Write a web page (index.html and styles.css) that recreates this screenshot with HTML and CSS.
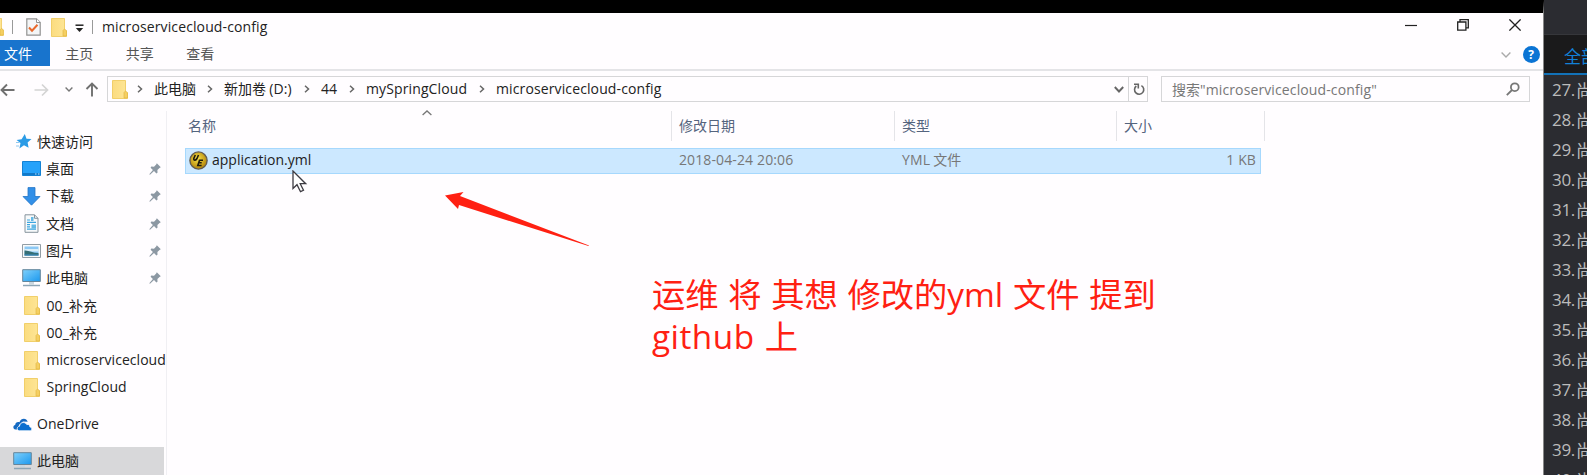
FILE: index.html
```html
<!DOCTYPE html>
<html lang="zh-CN">
<head>
<meta charset="utf-8">
<title>microservicecloud-config</title>
<link rel="stylesheet" href="styles.css">
</head>
<body>
<svg class="defs" width="0" height="0">
  <defs>
    <linearGradient id="gFolder" x1="0" x2="1"><stop offset="0" stop-color="#fbdc80"/><stop offset="1" stop-color="#fee697"/></linearGradient>
    <linearGradient id="gScreen" x1="0" y1="0" x2="1" y2="1"><stop offset="0" stop-color="#7fd0fb"/><stop offset="1" stop-color="#1b98ee"/></linearGradient>
    <radialGradient id="gUe" cx=".45" cy=".4"><stop offset="0" stop-color="#f5e04a"/><stop offset="1" stop-color="#bd9212"/></radialGradient>
    <symbol id="folder" viewBox="0 0 16 19"><path d="M.5.5h13V12l2 1v5.5H.5z" fill="url(#gFolder)" stroke="#eec654" stroke-width=".8"/><path d="M12 18v-5.5l1.5-1.5 2 1.500V18z" fill="#f5cf62" stroke="#dfb33c" stroke-width=".6"/></symbol>
    <symbol id="pc" viewBox="0 0 19 18"><path d="M.7.7h17.600v11.800H.7z" fill="url(#gScreen)" stroke="#66859a" stroke-width="1"/><path d="M7 13h5v2.500H7z" fill="#c9d6df"/><path d="M1 16.500h17" stroke="#8da5b5" stroke-width="1.500"/></symbol>
    <symbol id="pin" viewBox="0 0 12 12"><path d="M7.800.3l4 4-1.300.6-2.100 2.200.1 2.700-1.100.6-2.400-2.300L1 11.800l-.7-.6L3.900 7 1.600 4.700l.7-1.100 2.700.1L7.200 1.500z" fill="#8c98a3"/></symbol>
    <symbol id="chev" viewBox="0 0 6 8"><path d="M1 .8L4.500 4 1 7.200" fill="none" stroke="#666" stroke-width="1.500"/></symbol>
  </defs>
</svg>
<div class="screen">
  <main class="window">
    <div class="titlebar">
      <div class="quick">
        <svg class="q-cut" width="4" height="18" viewBox="12 0 4 19"><use href="#folder" width="16" height="19"/></svg>
        <i class="q-sep"></i>
        <svg class="q-check" width="15" height="18" viewBox="0 0 15 18"><path d="M.8.800h9.700l3.700 3.700v12.700H.8z" fill="#f4f5f7" stroke="#929292" stroke-width="1.200"/><path d="M10.500.8v3.700h3.700" fill="#fff" stroke="#929292"/><path d="M3 9.500l3 3.200 5.500-6" fill="none" stroke="#e8682c" stroke-width="2"/></svg>
        <svg class="q-folder" width="16" height="19"><use href="#folder"/></svg>
        <svg class="q-drop" width="9" height="9" viewBox="0 0 9 9"><path d="M.5 1.200h8" stroke="#222" stroke-width="1.500"/><path d="M.8 4h7.400L4.500 8z" fill="#222"/></svg>
        <i class="q-sep"></i>
        <h1 class="title lat">microservicecloud-config</h1>
      </div>
      <div class="controls">
        <svg width="12" height="12" viewBox="0 0 12 12"><path d="M0 6.500h12" stroke="#222" stroke-width="1.200"/></svg>
        <svg width="12" height="12" viewBox="0 0 12 12" fill="none" stroke="#222" stroke-width="1.300"><path d="M.7 3h8.200v8.200H.7zM3 3V.7h8.300v8.200H9"/></svg>
        <svg width="12" height="12" viewBox="0 0 12 12"><path d="M.4.4l11.200 11.200M11.600.4L.4 11.600" stroke="#222" stroke-width="1.300"/></svg>
      </div>
    </div>
    <nav class="ribbon">
      <span class="tab file">文件</span><span class="tab">主页</span><span class="tab">共享</span><span class="tab">查看</span>
      <div class="help">
        <svg width="10" height="6" viewBox="0 0 10 6"><path d="M.6.6L5 5 9.400.6" fill="none" stroke="#aaa" stroke-width="1.400"/></svg>
        <span class="q">?</span>
      </div>
    </nav>
    <div class="address">
      <div class="arrows">
        <svg width="15" height="14" viewBox="0 0 15 14" fill="none" stroke="#707070" stroke-width="1.900"><path d="M14.500 7H2M7 1.500L1.500 7 7 12.500"/></svg>
        <svg width="15" height="14" viewBox="0 0 15 14" fill="none" stroke="#d4d4d4" stroke-width="1.700"><path d="M.5 7H13M8 1.500L13.500 7 8 12.500"/></svg>
        <svg width="8" height="5" viewBox="0 0 8 5" fill="none" stroke="#777" stroke-width="1.400"><path d="M.6.600L4 4 7.400.6"/></svg>
        <svg width="14" height="15" viewBox="0 0 14 15" fill="none" stroke="#707070" stroke-width="1.900"><path d="M7 14.500V2M1.500 7L7 1.500 12.500 7"/></svg>
      </div>
      <div class="path">
        <svg class="p-folder" width="16" height="19"><use href="#folder"/></svg>
        <svg class="chev" width="6" height="8"><use href="#chev"/></svg>
        <span class="c1">此电脑</span>
        <svg class="chev" width="6" height="8"><use href="#chev"/></svg>
        <span class="c2">新加卷 <span class="lat">(D:)</span></span>
        <svg class="chev" width="6" height="8"><use href="#chev"/></svg>
        <span class="c3 lat">44</span>
        <svg class="chev" width="6" height="8"><use href="#chev"/></svg>
        <span class="c4 lat">mySpringCloud</span>
        <svg class="chev" width="6" height="8"><use href="#chev"/></svg>
        <span class="c5 lat">microservicecloud-config</span>
        <svg class="p-drop" width="10" height="7" viewBox="0 0 10 7"><path d="M.8 1L5 5.500 9.200 1" fill="none" stroke="#666" stroke-width="1.900"/></svg>
        <span class="refresh"><svg width="12" height="13" viewBox="0 0 12 13"><path d="M8.400 2.600A4.600 4.600 0 1 1 3.300 3" fill="none" stroke="#666" stroke-width="1.600"/><path d="M1 1.300h4.300v4.300" fill="none" stroke="#666" stroke-width="1.600"/></svg></span>
      </div>
      <div class="search"><span>搜索<span class="lat">"microservicecloud-config"</span></span>
        <svg width="14" height="14" viewBox="0 0 14 14" fill="none" stroke="#777" stroke-width="1.800"><circle cx="8.800" cy="5.200" r="3.900"/><path d="M6 8L.8 13.200"/></svg></div>
    </div>
    <div class="body">
      <aside class="side">
        <div class="item root"><svg class="ic" width="16" height="15" viewBox="0 0 16 15"><path d="M8.800 0l1.700 4.700 5 .4-3.900 3.400 1 5.300-4.600-2.500L3.400 14.500l1.100-5.400L.6 6l5-.7z" fill="#2b9be6"/><path d="M0 8.500h3.500M0 12h3" stroke="#8fc8ef"/></svg><span>快速访问</span></div>
        <div class="item"><svg class="ic" width="19" height="15" viewBox="0 0 19 15"><path d="M.5.500h18v14H.5z" fill="#26a2fa" stroke="#1482d4"/><path d="M1 13h17" stroke="#0d6bb8" stroke-width="1.500"/><path d="M13 13h1.500M16 13h1.500" stroke="#bfe3ff"/></svg><span>桌面</span><svg class="pin" width="12" height="12"><use href="#pin"/></svg></div>
        <div class="item"><svg class="ic" width="19" height="19" viewBox="0 0 19 19"><path d="M6 .6h7v8.900h5L9.500 18.200 1 9.500h5z" fill="#328fe8" stroke="#2374c5" stroke-width=".8"/></svg><span>下载</span><svg class="pin" width="12" height="12"><use href="#pin"/></svg></div>
        <div class="item"><svg class="ic" width="19" height="19" viewBox="0 0 19 19"><path d="M3 .8h9.500L16 4.300v14H3z" fill="#f7f9fb" stroke="#86939d"/><path d="M12.500.8v3.500H16" fill="none" stroke="#86939d"/><path d="M5 6h3M5 8.300h9M5 10.600h3M5 12.900h3M5 15.200h9" stroke="#3ca5df" stroke-width="1.200"/><path d="M9 3h2.500v4H9zM9.500 10.500H14v4H9.500z" fill="#64b9e6"/></svg><span>文档</span><svg class="pin" width="12" height="12"><use href="#pin"/></svg></div>
        <div class="item"><svg class="ic" width="19" height="14" viewBox="0 0 19 14"><path d="M.5.500h18v13H.5z" fill="#fafafa" stroke="#929da5"/><path d="M2.500 2.500h14v9h-14z" fill="#8cc8f5"/><path d="M2.500 5h14v2.500h-14z" fill="#d9eef9"/><path d="M2.500 6.500c4-.5 8 2.500 14 2.500v2.500h-14z" fill="#356e75"/><path d="M2.500 10.500h14v1h-14z" fill="#3b8bc5"/></svg><span>图片</span><svg class="pin" width="12" height="12"><use href="#pin"/></svg></div>
        <div class="item"><svg class="ic" width="19" height="18"><use href="#pc"/></svg><span>此电脑</span><svg class="pin" width="12" height="12"><use href="#pin"/></svg></div>
        <div class="item dir"><svg class="ic" width="16" height="19"><use href="#folder"/></svg><span><span class="lat">00_</span>补充</span></div>
        <div class="item dir"><svg class="ic" width="16" height="19"><use href="#folder"/></svg><span><span class="lat">00_</span>补充</span></div>
        <div class="item dir"><svg class="ic" width="16" height="19"><use href="#folder"/></svg><span class="lat">microservicecloud</span></div>
        <div class="item dir"><svg class="ic" width="16" height="19"><use href="#folder"/></svg><span class="lat">SpringCloud</span></div>
        <div class="item top"><svg class="ic" width="19" height="13" viewBox="0 0 19 13"><path d="M5 11.500H2.500C-.3 11.500-.3 7.500 2.200 7 2.200 4.500 4.800 3.300 6.400 4.300 8-.3 13.500-.3 14.700 3.800L10 3.500 6 7z" fill="#1569c2"/><path d="M6.500 12.800c-3-.2-3-4.300 0-4.600.3-4 5.500-5 7.300-1.600 2-.6 3.300.7 3.100 2.400 2.600.2 2.400 3.800 0 3.800z" fill="#0b6fd0" stroke="#fffdff" stroke-width=".8"/></svg><span class="lat">OneDrive</span></div>
        <div class="item top current"><svg class="ic" width="19" height="18"><use href="#pc"/></svg><span>此电脑</span></div>
      </aside>
      <section class="files">
        <svg class="sort" width="10" height="6" viewBox="0 0 10 6"><path d="M.6 5L5 1l4.400 4" fill="none" stroke="#777" stroke-width="1.300"/></svg>
        <div class="cols head"><span>名称</span><span>修改日期</span><span>类型</span><span>大小</span></div>
        <div class="cols row">
          <span class="name"><svg width="19" height="19" viewBox="0 0 19 19"><circle cx="9.500" cy="9.500" r="8.600" fill="url(#gUe)" stroke="#625b50" stroke-width="1.400"/><path d="M6.300 4L4.800 7.500q-.3 1.800 1.200 1.600 1.200-.1 2-1.600L9.500 4M14 9.200h-3.500L8.800 14.500h3.800M9.700 11.800h3" fill="none" stroke="#201b0b" stroke-width="1.600"/></svg><span class="lat">application.yml</span></span>
          <span class="lat">2018-04-24 20:06</span><span class="type"><span class="lat">YML</span> 文件</span><span class="size lat">1 KB</span>
        </div>
        <p class="note"><span class="n1">运维 将 其想 修改的yml 文件 提到</span><br><span class="n2">github 上</span></p>
      </section>
    </div>
    <svg class="pointer" width="16" height="24" viewBox="0 0 16 24"><path d="M1 1v17.500l4-3.800 3.500 7 3-1.400-3.300-6.600h5.500z" fill="#fff" stroke="#3d3b42" stroke-width="1.300"/></svg>
    <svg class="red-arrow" width="146" height="56" viewBox="0 0 146 56"><path d="M0 3.500L18.500 0 15 4 144 53.500 143.500 54 14 13l-1 4z" fill="#ff2012"/></svg>
  </main>
  <aside class="playlist">
    <div class="p-top"></div>
    <div class="p-tab">全部</div>
    <ol>
      <li><b>27.</b>尚</li><li><b>28.</b>尚</li><li><b>29.</b>尚</li><li><b>30.</b>尚</li><li><b>31.</b>尚</li><li><b>32.</b>尚</li><li><b>33.</b>尚</li><li><b>34.</b>尚</li><li><b>35.</b>尚</li><li><b>36.</b>尚</li><li><b>37.</b>尚</li><li><b>38.</b>尚</li><li><b>39.</b>尚</li><li><b>40.</b>尚</li>
    </ol>
  </aside>
</div>
</body>
</html>
```
FILE: styles.css
```css
* { box-sizing: border-box; margin: 0; padding: 0; }
body { width: 1587px; height: 475px; overflow: hidden; font: 14px/20px "Noto Sans CJK SC", sans-serif; color: #222; }
svg { display: block; flex: none; }
.defs { position: absolute; }
.lat { font-family: "Open Sans", "Noto Sans", sans-serif; font-size: 14px; letter-spacing: .12px; white-space: nowrap; }
.screen { display: flex; width: 1587px; height: 475px; overflow: hidden; }
.window { position: relative; width: 1544px; height: 475px; flex: none; background: #fffdff; border-top: 13px solid #000; border-right: 1px solid #888; overflow: hidden; display: flex; flex-direction: column; }

.titlebar { height: 27px; display: flex; justify-content: space-between; flex: none; }
.quick { display: flex; align-items: center; height: 28px; }
.q-sep { width: 1px; height: 14px; background: #999; margin-left: 8px; }
.q-check { margin-left: 13px; }
.q-folder { margin-left: 10px; }
.q-drop { margin: 2px 0 0 8px; }
.title { font-weight: 400; margin-left: 9px; }
.controls { display: flex; gap: 40px; padding: 6px 22px 0 0; }

.ribbon { height: 29px; flex: none; display: flex; align-items: flex-start; }
.tab { width: 60.500px; height: 26px; line-height: 26px; text-align: center; color: #555; }
.tab.file { width: 50px; background: #1874cd; color: #fff; padding-right: 14px; }
.tab.file + .tab { margin-left: -1px; }
.help { margin-left: auto; display: flex; align-items: center; gap: 12px; padding: 6px 3.500px 0 0; }
.q { width: 17px; height: 17px; border-radius: 50%; background: #0b74d4; color: #fff; font: bold 12px/17px "Open Sans", sans-serif; text-align: center; }

.address { height: 42px; flex: none; border-top: 2px solid #e4e4e7; display: flex; padding-top: 5px; }
.arrows { width: 107px; height: 27px; display: flex; align-items: center; }
.arrows svg:nth-child(2) { margin-left: 19px; }
.arrows svg:nth-child(3) { margin-left: 16px; }
.arrows svg:nth-child(4) { margin-left: 12px; }
.path { width: 1041px; height: 26px; border: 1px solid #d6d6d8; display: flex; align-items: center; white-space: nowrap; }
.p-folder { margin: 0 9px 0 4px; }
.path > span { flex: none; line-height: 24px; height: 24px; }
.path > .c1, .path > .c2 { line-height: 22px; }
.c1 { width: 53px; margin-left: 11px; }
.c2 { width: 80px; margin-left: 11px; }
.c3 { width: 28px; margin-left: 11px; }
.c4 { width: 113px; margin-left: 11px; }
.c5 { margin-left: 11px; }
.p-drop { margin-left: auto; margin-right: 4px; }
.refresh { width: 19px; border-left: 1px solid #d6d6d8; display: flex; align-items: center; padding-left: 4px; }
.search { width: 369px; height: 26px; margin-left: 13px; border: 1px solid #d6d6d8; color: #777; display: flex; align-items: center; justify-content: space-between; padding: 0 9px 0 10px; line-height: 24px; }

.body { display: flex; flex: 1; min-height: 0; }
.side { width: 167px; border-right: 1px solid #f0eff3; padding: 17px 2px 0 0; flex: none; overflow: hidden; }
.item { height: 27.300px; display: flex; align-items: center; padding-left: 22px; }
.item > span { margin: -2px 0 0 5px; white-space: nowrap; }
.item > .lat { margin-top: 0; letter-spacing: .05px; }
.item .pin { margin-left: auto; margin-right: 3px; }
.item.root { padding-left: 16px; }
.item.dir { padding-left: 24px; }
.item.dir > span { margin-left: 6.500px; margin-top: 0; }
.item.top { padding-left: 13px; margin-top: 9.500px; }
.current { background: #d8d8da; }

.files { flex: 1; position: relative; }
.sort { position: absolute; left: 255px; top: -1px; }
.cols { display: grid; grid-template-columns: 487px 223px 222px 1fr; }
.head { width: 1080px; margin-left: 18px; height: 30px; color: #54647e; }
.head span { padding-left: 7px; line-height: 29px; border-right: 1px solid #e4e4e8; }
.head span:first-child { padding-left: 3px; }
.row { margin: 7px 0 0 18px; width: 1076px; height: 26px; background: #cce8ff; border: 1px solid #a6d8fd; color: #777; line-height: 22px; }
.row > span { padding-left: 6px; }
.row > .type { line-height: 21px; }
.row .name { display: flex; align-items: center; gap: 4px; padding-left: 3px; color: #222; height: 22px; }
.name .lat { letter-spacing: 0; }
.row .size { text-align: right; padding-right: 4px; }
.note { margin: 99px 0 0 485px; font: 33.300px/42px "Open Sans", "Noto Sans CJK SC", sans-serif; color: #ff2012; white-space: nowrap; word-spacing: 1px; }
.n2 { letter-spacing: .5px; }
.pointer { position: absolute; left: 292px; top: 157px; }
.red-arrow { position: absolute; left: 445px; top: 179px; }

.playlist { width: 43px; background: #2b2c31; color: #bbb; overflow: hidden; white-space: nowrap; }
.p-top { height: 35px; border-bottom: 1px solid #36373b; }
.p-tab { height: 40px; background: #1a1a1b; color: #1281d8; border-bottom: 2px solid #1272b8; padding-left: 20px; font-size: 17px; line-height: 41px; }
.playlist ol { list-style: none; padding: 0 0 0 8px; }
.playlist li { height: 30px; line-height: 30px; font-size: 17px; display: flex; }
.playlist b { font: 17px/30px "Open Sans", sans-serif; letter-spacing: -.3px; width: 24px; flex: none; }
```
